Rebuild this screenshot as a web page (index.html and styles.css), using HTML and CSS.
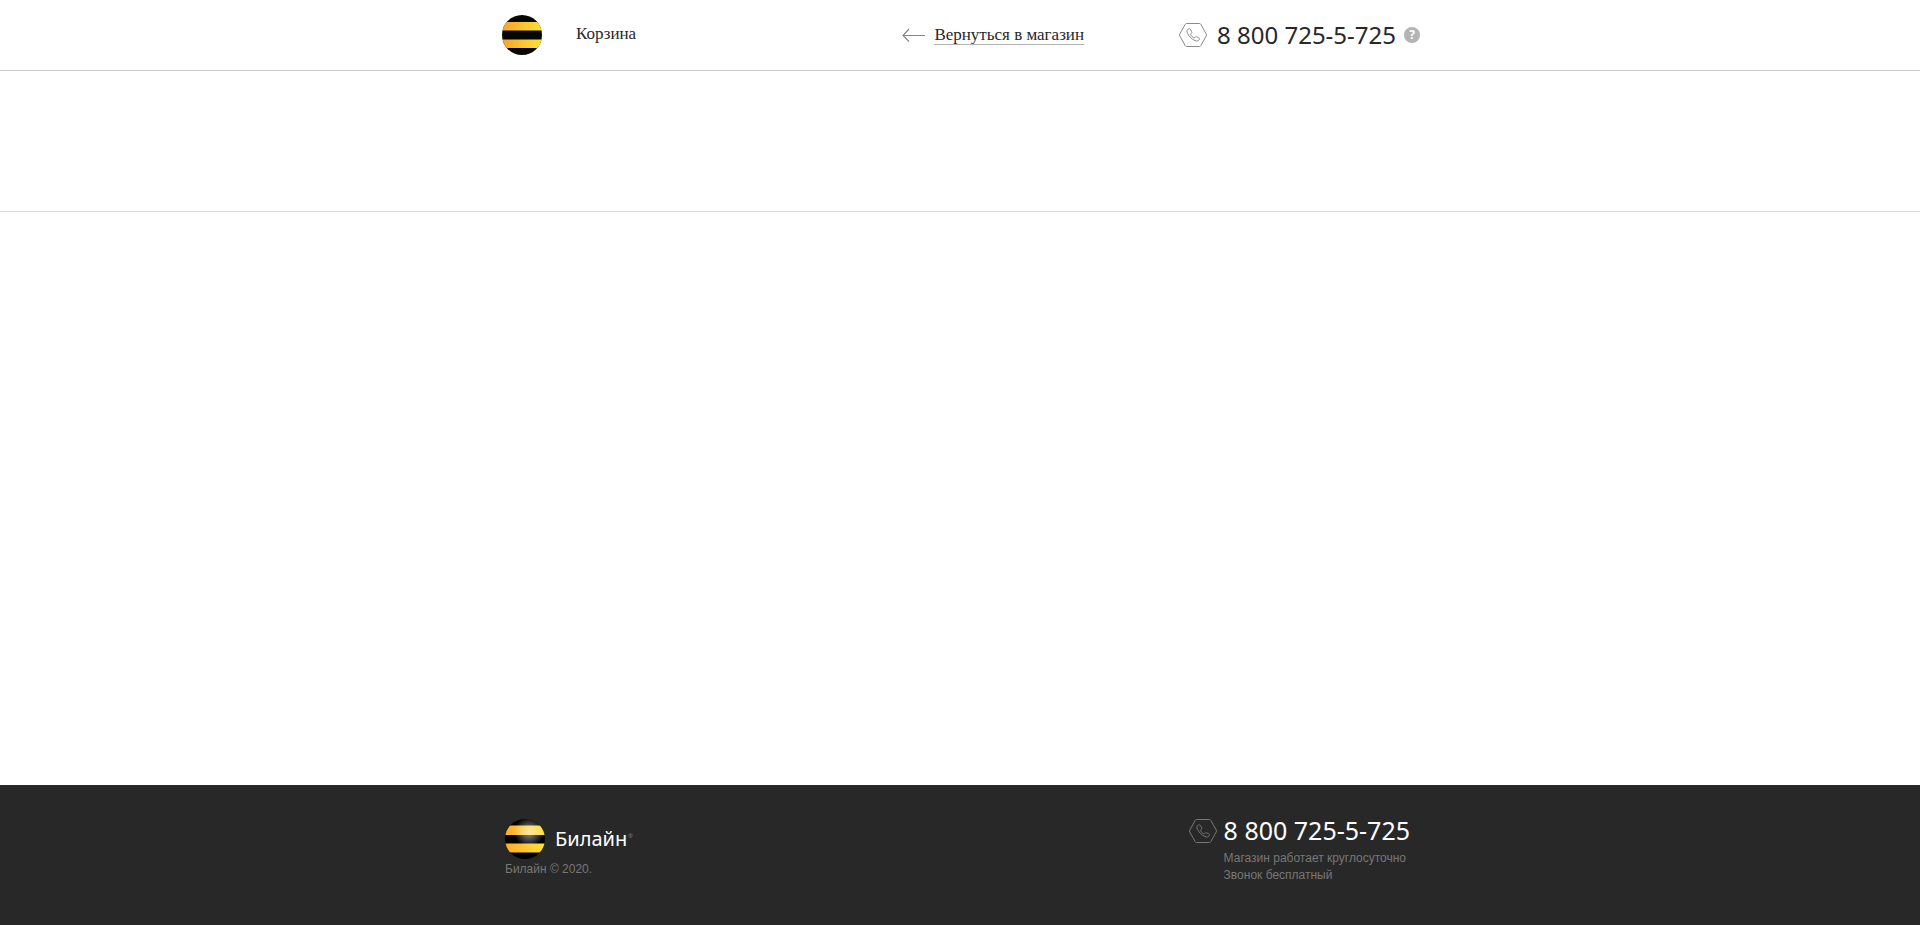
FILE: index.html
```html
<!DOCTYPE html>
<html lang="ru">
<head>
<meta charset="utf-8">
<title>Корзина</title>
<link rel="stylesheet" href="styles.css">
</head>
<body>
<header class="header">
  <div class="container header-row">
    <a class="logo" href="#" aria-label="Билайн">
      <svg width="40" height="40" viewBox="0 0 40 40">
        <defs>
          <linearGradient id="flat"><stop offset="0" stop-color="#f8a22b"/><stop offset="1" stop-color="#ffe236"/></linearGradient>
          <clipPath id="disc"><circle cx="20" cy="20" r="20"/></clipPath>
        </defs>
        <g clip-path="url(#disc)">
          <path fill="#050700" d="M0 0h40v40H0z"/>
          <path fill="url(#flat)" d="M0 7h40v8.500H0zM0 24.500h40V33H0z"/>
        </g>
      </svg>
    </a>
    <span class="title">Корзина</span>
    <a class="back" href="#">
      <svg width="24" height="14" viewBox="0 0 24 14" fill="none" stroke="#868686" stroke-width="1.200"><path d="M23 7.500H1M7 1L1 7.500 7 13.500"/></svg>
      <span class="back-text">Вернуться в магазин</span>
    </a>
    <div class="phone">
      <svg class="phone-icon" width="28" height="24" viewBox="0 0 28 24" fill="none" stroke="#8a8a8a">
        <path d="M7.500.5h13q.8 0 1.200.7l5.500 9.800q.5 1 0 2l-5.500 9.800q-.4.7-1.200.7h-13q-.8 0-1.200-.7L.8 13q-.5-1 0-2l5.500-9.800q.4-.7 1.200-.7z"/>
        <path d="M9.500 6c-1.800.7-2 2.500-.9 4.500 1.500 3 4 5.500 7.200 7 2 .9 3.800.6 4.600-1.300.3-.8-.2-1.200-.8-1.500l-2-.9c-.9-.3-1.200.2-1.700.8-.5.500-1 .3-1.500 0-1.200-.7-2-1.600-2.700-2.800-.3-.6-.2-1 .3-1.300.7-.5 1-.9.6-1.700l-1.100-2.200c-.4-.8-1.100-.9-2-.6z"/>
      </svg>
      <a class="phone-number" href="tel:88007255725">8 800 725-5-725</a>
      <button class="help" type="button" aria-label="Справка">?</button>
    </div>
  </div>
</header>
<main class="main">
  <div class="steps"></div>
</main>
<footer class="footer">
  <div class="container footer-row">
    <div class="brand">
      <a class="brand-link" href="#">
        <svg width="40" height="40" viewBox="0 0 40 40">
          <defs>
            <linearGradient id="band"><stop offset="0" stop-color="#ffab2b"/><stop offset="1" stop-color="#ffe236"/></linearGradient>
            <radialGradient id="shine" cx="24" cy="13" r="15" gradientUnits="userSpaceOnUse"><stop offset="0" stop-color="#fff" stop-opacity=".55"/><stop offset=".4" stop-color="#fff" stop-opacity=".35"/><stop offset="1" stop-color="#fff" stop-opacity="0"/></radialGradient>
          </defs>
          <g clip-path="url(#disc)">
            <path fill="#000" d="M0 0h40v40H0z"/>
            <path fill="url(#band)" d="M0 6.500h40V16H0zM0 24.500h40v9H0z"/>
            <circle cx="24" cy="13" r="15" fill="url(#shine)"/>
          </g>
        </svg>
        <span class="brand-name">Билайн</span><span class="mark">®</span>
      </a>
      <p class="note">Билайн © 2020.</p>
    </div>
    <div class="contacts">
      <svg class="phone-icon" width="28" height="24" viewBox="0 0 28 24" fill="none" stroke="#777">
        <path d="M7.500.5h13q.8 0 1.200.7l5.500 9.800q.5 1 0 2l-5.500 9.800q-.4.7-1.200.7h-13q-.8 0-1.200-.7L.8 13q-.5-1 0-2l5.500-9.800q.4-.7 1.200-.7z"/>
        <path d="M9.500 6c-1.800.7-2 2.500-.9 4.500 1.500 3 4 5.500 7.200 7 2 .9 3.800.6 4.600-1.300.3-.8-.2-1.200-.8-1.500l-2-.9c-.9-.3-1.200.2-1.700.8-.5.500-1 .3-1.500 0-1.200-.7-2-1.600-2.700-2.800-.3-.6-.2-1 .3-1.300.7-.5 1-.9.600-1.700l-1.100-2.200c-.4-.8-1.100-.9-2-.6z"/>
      </svg>
      <div class="contacts-text">
        <a class="phone-number phone-light" href="tel:88007255725">8 800 725-5-725</a>
        <p class="note">Магазин работает круглосуточно<br>Звонок бесплатный</p>
      </div>
    </div>
  </div>
</footer>
</body>
</html>
```
FILE: styles.css
```css
* {
  box-sizing: border-box;
}

body {
  display: flex;
  flex-direction: column;
  min-height: 100vh;
  margin: 0;
  background: #fff;
  color: #282828;
  font-family: "Liberation Sans", Arial, sans-serif;
}

a {
  color: inherit;
  text-decoration: none;
}

svg {
  display: block;
  flex: none;
}

.container {
  width: 100%;
  max-width: 920px;
  margin: 0 auto;
}

.header {
  border-bottom: 1px solid #c8c8c8;
}

.header-row {
  display: flex;
  align-items: center;
  height: 70px;
  padding-left: 2px;
}

.title,
.back {
  font-family: "Liberation Serif", "Times New Roman", serif;
  font-size: 17px;
  line-height: 18px;
}

.title {
  margin-left: 34px;
  padding-bottom: 2px;
}

.back {
  display: flex;
  align-items: center;
  gap: 8px;
  margin-left: auto;
}

.back-text {
  border-bottom: 1px solid #b4b4b4;
}

.phone {
  display: flex;
  align-items: center;
  margin-left: 95px;
}

.phone-number {
  margin-left: 10px;
  font-family: "Noto Sans", sans-serif;
  font-size: 24px;
  line-height: 28px;
  white-space: nowrap;
}

.help {
  width: 16px;
  height: 16px;
  margin-left: 8px;
  padding: 0;
  border: 0;
  border-radius: 50%;
  background: #b4b4b4;
  color: #fff;
  font: bold 12px/16px "Noto Sans", sans-serif;
}

.main {
  flex: 1;
}

.steps {
  height: 141px;
  border-bottom: 1px solid #d9d9d9;
}

.footer {
  background: #282828;
}

.footer-row {
  display: flex;
  justify-content: space-between;
  min-height: 140px;
  padding: 31px 10px 31px 5px;
}

.brand-link {
  display: flex;
  align-items: center;
  padding-top: 3px;
}

.brand-name {
  margin-left: 10px;
  color: #fff;
  font-family: "Noto Sans", sans-serif;
  font-size: 20px;
  line-height: 24px;
}

.mark {
  align-self: flex-start;
  margin: 14px 0 0 1px;
  color: #999;
  font-size: 6px;
  line-height: 6px;
}

.note {
  margin: 2px 0 0;
  color: #777;
  font-size: 12px;
  line-height: 17px;
}

.contacts {
  display: flex;
  gap: 7px;
}

.contacts .phone-icon {
  margin-top: 3px;
}

.contacts-text .note {
  margin-top: 6px;
}

.phone-light {
  display: block;
  margin-left: 0;
  color: #fff;
  font-size: 25px;
}
```
